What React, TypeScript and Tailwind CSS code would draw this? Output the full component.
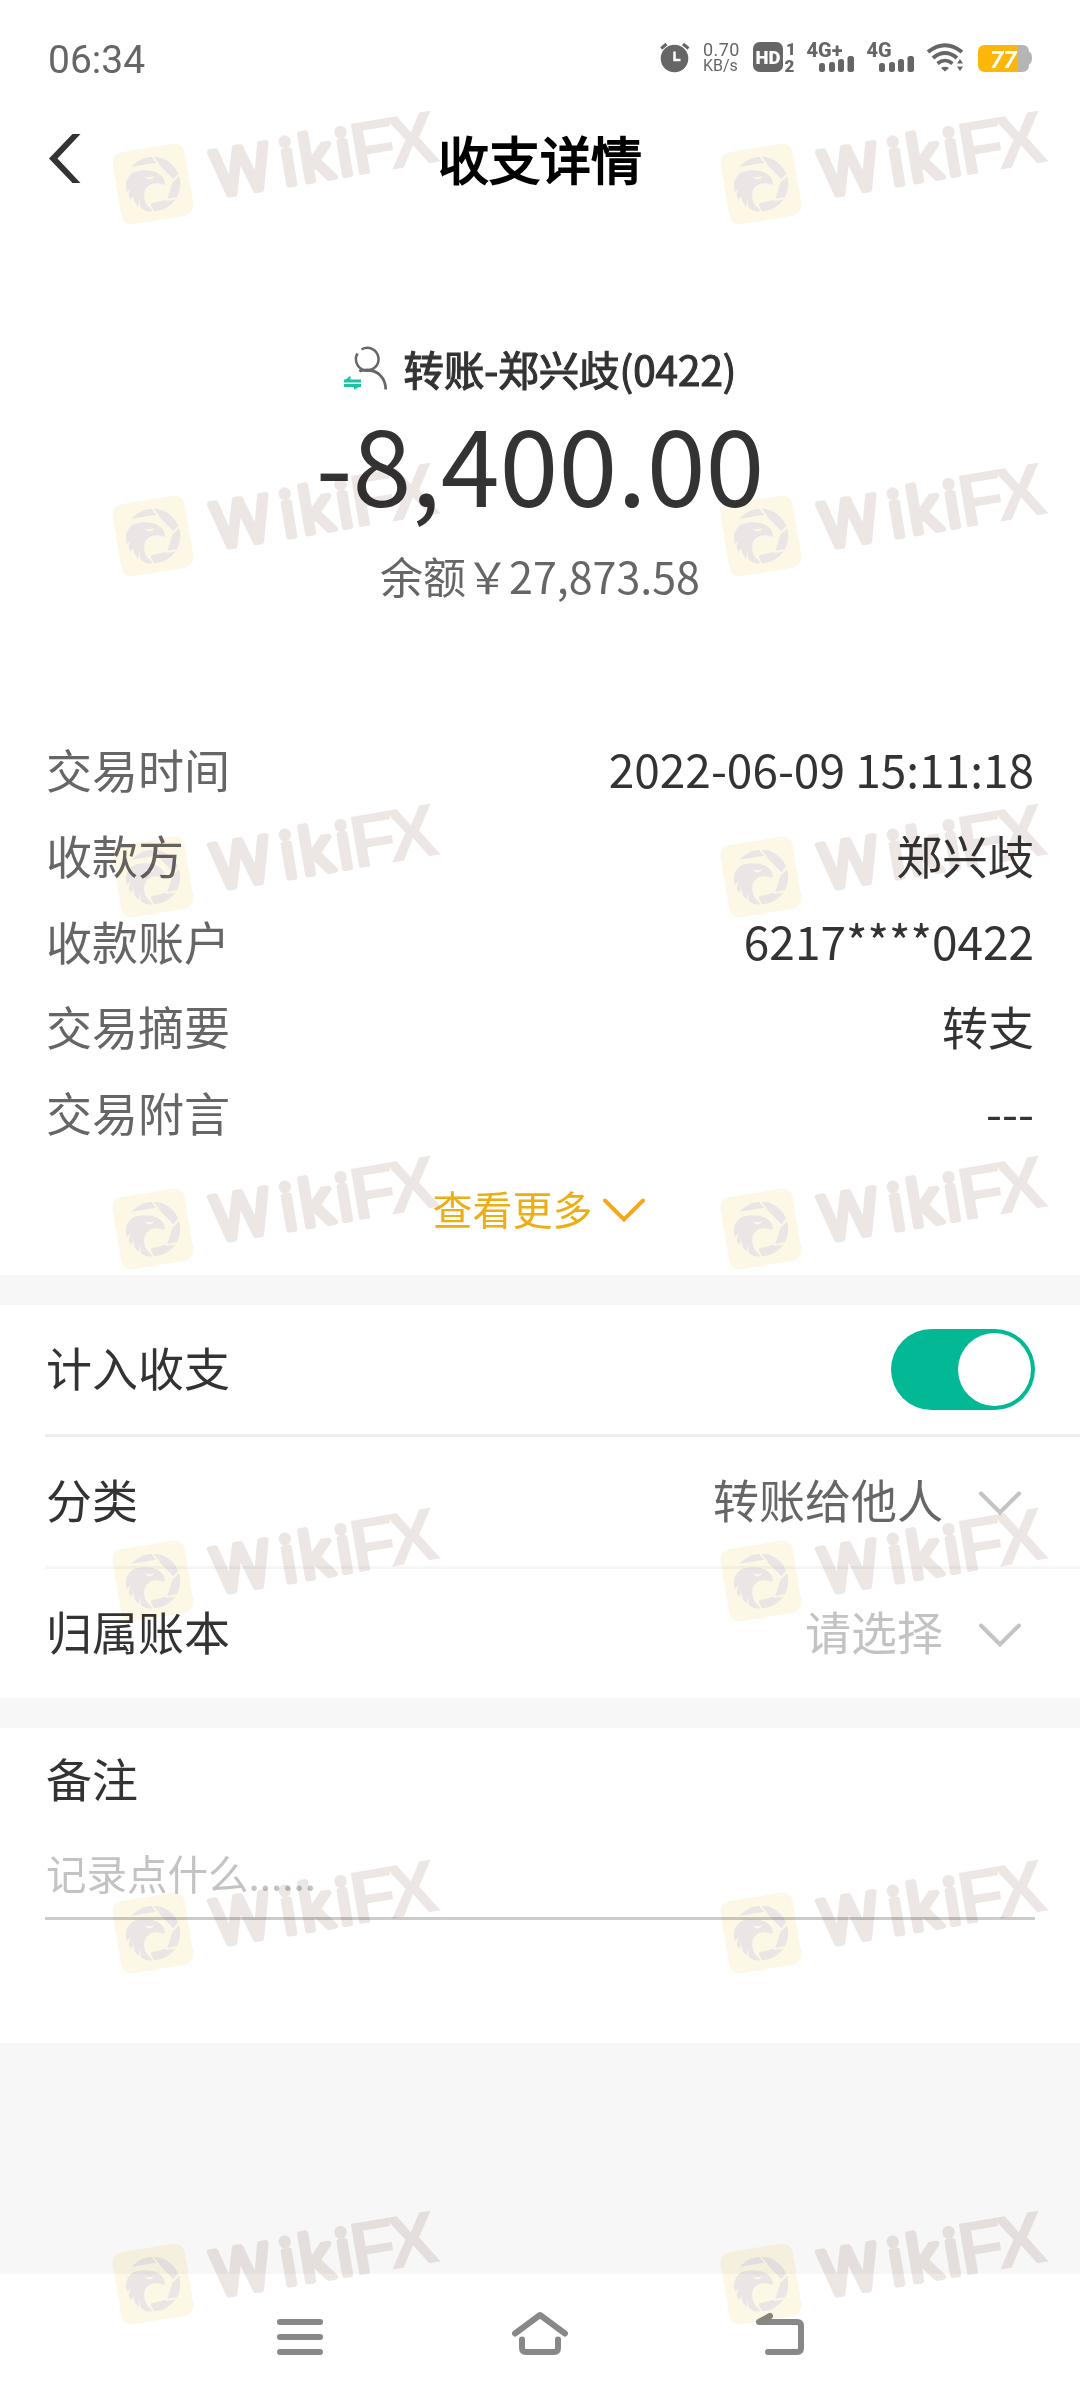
import React from 'react'

const details = [
  { label: '交易时间', value: '2022-06-09 15:11:18' },
  { label: '收款方', value: '郑兴歧' },
  { label: '收款账户', value: '6217****0422' },
  { label: '交易摘要', value: '转支' },
  { label: '交易附言', value: '---' },
]

const watermarks = [
  'left-[153px] top-[184px]',
  'left-[761px] top-[184px]',
  'left-[153px] top-[536px]',
  'left-[761px] top-[536px]',
  'left-[153px] top-[877px]',
  'left-[761px] top-[877px]',
  'left-[153px] top-[1229px]',
  'left-[761px] top-[1229px]',
  'left-[153px] top-[1581px]',
  'left-[761px] top-[1581px]',
  'left-[153px] top-[1933px]',
  'left-[761px] top-[1933px]',
  'left-[153px] top-[2284px]',
  'left-[761px] top-[2284px]',
]

function Watermark({ place }: { place: string }) {
  return (
    <svg className={`absolute overflow-visible mix-blend-multiply ${place}`} width="1" height="1">
      <rect x="-36.5" y="-36.5" width="73" height="73" rx="10" fill="#fdf7e6" transform="rotate(-9.5)" />
      {/* Shutter ring */}
      <circle r="27.3" fill="#ebe6e5" />
      <path d="M-25 -16.500L4 -21.500L20.500 -4.500L14 15.500L-2 19.500L-5 28L-20 24L-29 2Z" fill="#fdf7e6" />
      <path
        d="M-2 -29L6 -19M29 -13L20 -3M13 16L26 14M-5 18L1 29"
        stroke="#fdf7e6"
        strokeWidth="2"
        fill="none"
      />
      {/* Eagle head */}
      <path
        d="M-27.300 2C-27 -3 -25 -7 -22 -10C-17 -14 -8 -14.500 -1 -13C5 -12 11 -8 12 -1L10.500 1C5 -2 -1 -1 -5 2C-10 6 -10 15 -6 21L-1 27.500C-6 28 -10 26 -12 24L-14 15L-14 23C-18 20 -20 17 -19 11L-22 16C-25 12 -25 9 -22 4L-26 8Z"
        fill="#ebe6e5"
      />
      <path d="M-8 -8C-5 -6 -2 -7 1 -8L-1 -5C-4 -4 -7 -5 -8 -8Z" fill="#fdf7e6" />
      <g transform="rotate(-9.5)">
        <text
          x="60.500 129 148 185.500"
          y="23"
          fontSize="63"
          fill="#ece6e4"
          stroke="#ece6e4"
          strokeWidth="6"
          strokeLinejoin="round"
          className="font-['Open_Sans',sans-serif]"
        >
          Wiki
        </text>
        <text
          x="200 238"
          y="25"
          fontSize="75"
          fill="#ece6e4"
          className="font-['Liberation_Sans',sans-serif] font-bold"
        >
          FX
        </text>
      </g>
    </svg>
  )
}

function SignalIcon({ label }: { label: string }) {
  return (
    <svg className="overflow-visible" width="48" height="30" fill="#666">
      <text x="-0.5" y="14.5" fontSize="20" className="font-['Roboto',sans-serif] font-extrabold">
        {label}
      </text>
      <rect x="12" y="21" width="6" height="9" rx="2.5" />
      <rect x="22" y="20" width="6" height="10" rx="2.5" />
      <rect x="31" y="17" width="6" height="13" rx="2.5" />
      <rect x="40.5" y="14" width="6.5" height="16" rx="2.5" />
    </svg>
  )
}

function StatusBar() {
  return (
    <div className="flex h-[116px] items-start justify-between pl-12 text-[#666]">
      <span className="mt-[39px] font-['Roboto',sans-serif] text-[39px] leading-[42px]">06:34</span>
      <div className="flex pt-[42px] pr-12">
        <svg className="overflow-visible" width="30" height="30">
          <circle cx="14.5" cy="16.5" r="13.8" fill="#666" />
          <path d="M1.2 6.5L6.5 2M28.5 6.5L23 2" stroke="#666" strokeWidth="3" />
          <path d="M14.5 9.5V18H20.5" stroke="#fff" strokeWidth="2.5" fill="none" />
        </svg>
        <div className="ml-[13px] flex w-[38px] flex-col font-['Roboto',sans-serif] text-[18px] leading-[16px]">
          <span className="tracking-[0.4px]">0.70</span>
          <span className="text-[16px]">KB/s</span>
        </div>
        <svg className="ml-3 overflow-visible" width="42" height="30" fill="#666">
          <rect width="30" height="30" rx="6.5" />
          <text x="2.5" y="22" fontSize="18.5" fill="#fff" textLength="25" lengthAdjust="spacingAndGlyphs" className="font-['Roboto',sans-serif] font-black">
            HD
          </text>
          <text x="33" y="12.5" fontSize="17" className="font-['Roboto',sans-serif] font-black">1</text>
          <text x="31.5" y="29.5" fontSize="17" className="font-['Roboto',sans-serif] font-black">2</text>
        </svg>
        <div className="ml-3 flex gap-3">
          <SignalIcon label="4G+" />
          <SignalIcon label="4G" />
        </div>
        <svg className="ml-3 overflow-visible" width="37" height="30" fill="none">
          <path d="M1 10Q18 -3.5 35 10" stroke="#666" strokeWidth="4" />
          <path d="M6 16Q18 6 30 16" stroke="#666" strokeWidth="4" />
          <path d="M10.5 21.5Q18 15.5 25.5 21.5" stroke="#666" strokeWidth="3.6" />
          <path d="M14 26Q18 23.5 22 26L18 29.5Z" fill="#666" />
          <path d="M30 21.5L33 17L36 21.5ZM30 24.5L33 29L36 24.5Z" fill="#666" />
        </svg>
        <svg className="ml-[14px] overflow-visible" width="54" height="30">
          <path d="M48 10H51.500Q54 11 54 16Q54 21 51.500 22H48Z" fill="#b5b5b5" />
          <path d="M38 3H44Q51 3 51 10V23Q51 30 44 30H38Z" fill="#b5b5b5" />
          <path d="M7 3H40V30H7Q0 30 0 23V10Q0 3 7 3Z" fill="#fdb60a" />
          <text x="12" y="25.500" fontSize="24" fill="#fff" className="font-['Roboto',sans-serif] font-bold italic">
            77
          </text>
        </svg>
      </div>
    </div>
  )
}

function Chevron({ color }: { color: string }) {
  return (
    <svg className="mt-1" width="42" height="25" fill="none" stroke={color} strokeWidth="4" strokeLinecap="round">
      <path d="M2 2.500L21 21.500L40 2.500" />
    </svg>
  )
}

function TransferIcon() {
  return (
    <svg className="overflow-visible" width="44" height="46" fill="none">
      <path d="M17.500 2.500A11.300 11.300 0 1 1 13.500 6.500" stroke="#666" strokeWidth="2.500" />
      <path d="M15.500 24.500C17 23 20 23 23.500 23C34 23.500 41.700 31 41.700 42.500" stroke="#666" strokeWidth="2.800" />
      <path d="M0 34H17M0 38.500H17" stroke="#1fc3a0" strokeWidth="3" />
      <path d="M0 34L6.500 28.500V34ZM17 38.500L10 43V38.500Z" fill="#1fc3a0" />
    </svg>
  )
}

function NavBar() {
  return (
    <div className="flex h-[126px] items-start justify-between bg-white px-[276px] pt-[37px]">
      <svg width="48" height="46" stroke="#888" strokeWidth="6" strokeLinecap="round">
        <path d="M4 11H44M4 26H44M4 41H44" />
      </svg>
      <svg className="ml-[-1px]" width="60" height="46" fill="none" stroke="#888" strokeWidth="6" strokeLinecap="round" strokeLinejoin="round">
        <path d="M5 22.500L30 4L55 22.500" />
        <path d="M12 28.500V37Q12 41 16 41H44Q48 41 48 37V28.500" />
      </svg>
      <svg width="48" height="46" fill="none" stroke="#888" strokeWidth="6" strokeLinecap="round" strokeLinejoin="round">
        <path d="M14 5L3 11H41Q45 11 45 15V37Q45 41 41 41H12" />
      </svg>
    </div>
  )
}

export default function App() {
  return (
    <div className="relative isolate h-[2400px] w-[1080px] overflow-hidden bg-[#f7f7f7] font-['Noto_Sans_CJK_SC',sans-serif] text-[#333]">
      <section className="h-[1275px] bg-white">
        <StatusBar />
        <header className="grid h-[88px] grid-cols-[1fr_auto_1fr] items-center px-[49px]">
          <svg className="mb-[3px]" width="32" height="49" fill="#333">
            <path d="M0 24.500L23.500 0H31.500L8.500 24.500L31.500 49H23.500Z" />
          </svg>
          <h1 className="mb-1 text-[51px] leading-[80px] font-normal text-black [-webkit-text-stroke:1.800px_#000]">收支详情</h1>
        </header>

        {/* Amount */}
        <div className="flex flex-col items-center pt-[136px]">
          <div className="flex h-[60px] items-center gap-4">
            <TransferIcon />
            <span className="mb-0.5 text-[40.4px] leading-[58px] [-webkit-text-stroke:1.200px_#333]">转账-郑兴歧(0422)</span>
          </div>
          <div className="-mt-[9px] text-[106px] leading-[140px]">-8,400.00</div>
          <div className="mt-3 text-[43px] leading-[64px] text-[#666]">余额￥27,873.58</div>
        </div>

        <dl className="mt-[119px] px-[46px]">
          {details.map((item) => (
            <div key={item.label} className="flex h-[85.7px] items-center justify-between text-[46px]">
              <dt className="text-[#666]">{item.label}</dt>
              <dd>{item.value}</dd>
            </div>
          ))}
        </dl>

        <button className="mt-6 flex h-[60px] w-full items-center justify-center gap-2.5 pr-[3px] text-[40px] text-[#edae14]">
          查看更多
          <Chevron color="#f5a81c" />
        </button>
      </section>

      {/* Bookkeeping options */}
      <section className="mt-[30px] bg-white pl-[46px] text-[46px]">
        <div className="-ml-px flex h-[132px] items-center justify-between border-b-3 border-[#ededed] pr-[45px] pl-px">
          <span className="mb-1.5">计入收支</span>
          <div className="flex h-[81px] w-[144px] items-center justify-end rounded-full bg-[#03b995] pr-1">
            <div className="size-[73px] rounded-full bg-white" />
          </div>
        </div>
        <div className="-ml-px flex h-[132px] items-center justify-between border-b-3 border-[#f6f6f6] pr-[59px] pl-px">
          <span className="mb-1.5">分类</span>
          <div className="flex items-center gap-9 text-[#666]">
            <span className="mb-1.5">转账给他人</span>
            <Chevron color="#c3c3c3" />
          </div>
        </div>
        <div className="flex h-[129px] items-center justify-between pr-[59px]">
          <span className="mb-1.5">归属账本</span>
          <div className="flex items-center gap-9 text-[#c3c3c3]">
            <span className="mb-1.5">请选择</span>
            <Chevron color="#c3c3c3" />
          </div>
        </div>
      </section>

      {/* Note */}
      <section className="mt-[30px] h-[315px] bg-white px-[45px] pt-[14px]">
        <h2 className="pl-px text-[46px] leading-[70px]">备注</h2>
        <div className="mt-[22px] h-[86px] border-b-3 border-[#cbcbcb] pt-[9px] pl-px text-[40.5px] leading-[60px] text-[#c3c3c3]">
          记录点什么......
        </div>
      </section>

      <div className="h-[231px]" />
      <NavBar />

      {watermarks.map((place) => (
        <Watermark key={place} place={place} />
      ))}
    </div>
  )
}
